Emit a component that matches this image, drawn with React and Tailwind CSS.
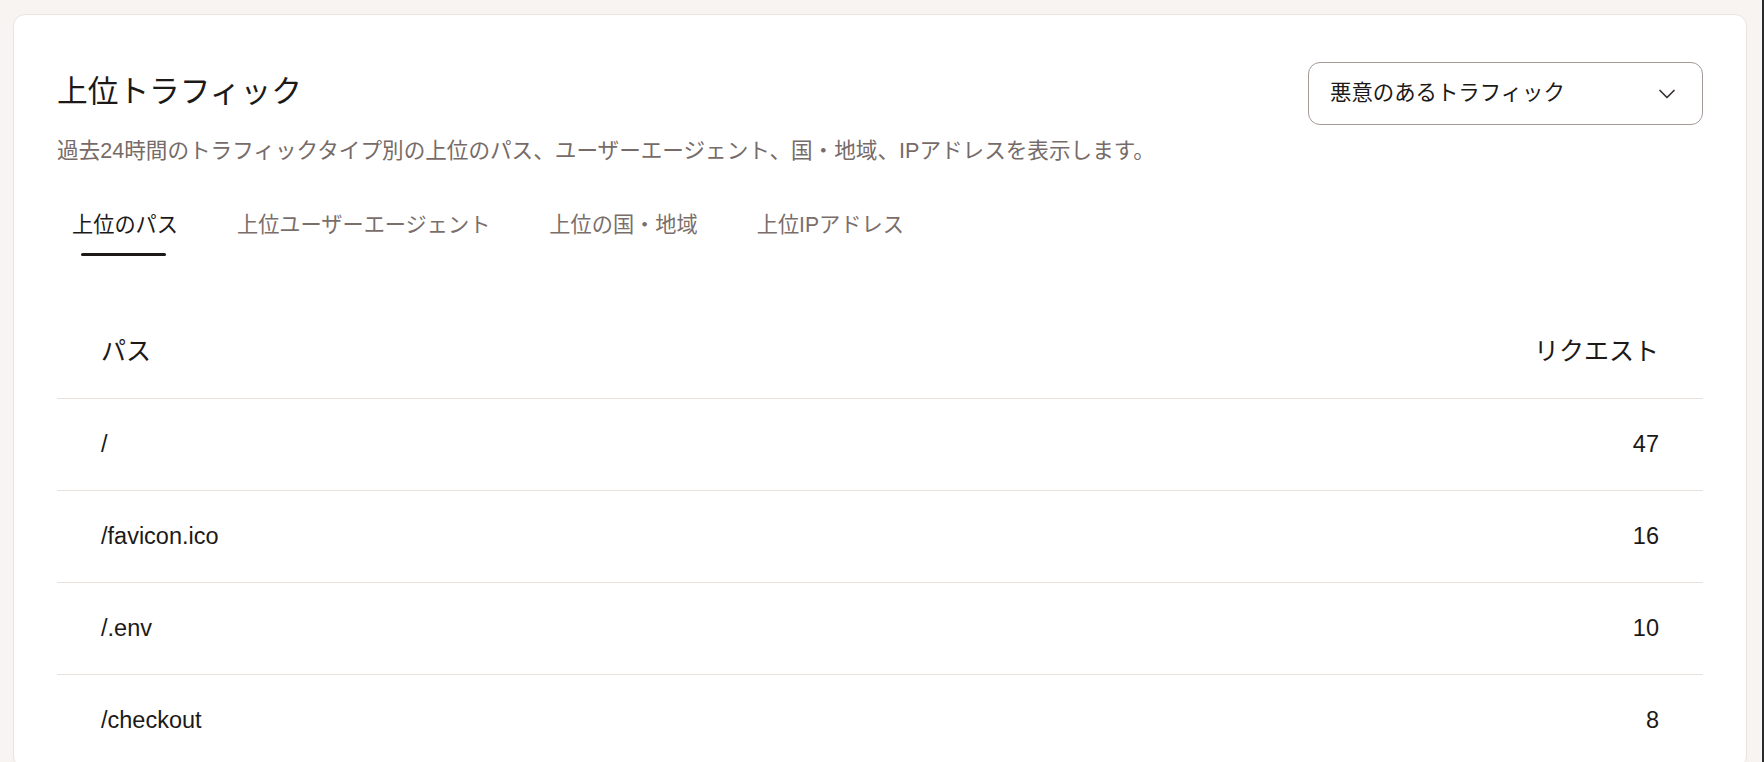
import React from 'react';
import { ChevronDown } from 'lucide-react';

const tabs = ['上位のパス', '上位ユーザーエージェント', '上位の国・地域', '上位IPアドレス'];

const rows = [
  { path: '/', count: 47 },
  { path: '/favicon.ico', count: 16 },
  { path: '/.env', count: 10 },
  { path: '/checkout', count: 8 },
];

export default function App() {
  return (
    <div className="flex h-[762px] overflow-hidden bg-[#f8f4f1] font-['Liberation_Sans','Noto_Sans_CJK_JP',sans-serif] text-[#1c1917]">
      <div className="flex-1 pl-[13px] pr-[15px] pt-[14px]">
        <div className="rounded-[12px] border border-[#ebe3de] bg-white px-[43px] pt-[47px]">
          {/* header */}
          <div className="flex items-start justify-between">
            <div>
              <h2 className="mt-[12px] text-[30.7px] font-normal leading-[36px]">上位トラフィック</h2>
              <p className="mt-[26px] text-[21.6px] leading-[30px] text-[#766b68]">
                過去24時間のトラフィックタイプ別の上位のパス、ユーザーエージェント、国・地域、IPアドレスを表示します。
              </p>
            </div>
            <button className="flex h-[63px] w-[395px] items-center justify-between rounded-[12px] border border-[#a39a97] pl-[21px] pr-[21px] text-[21.4px]">
              <span>悪意のあるトラフィック</span>
              <ChevronDown size={28} strokeWidth={1.5} className="text-[#3a3330]" />
            </button>
          </div>

          {/* tabs */}
          <div className="mt-[44px] flex gap-[29px]">
            {tabs.map((t, i) => (
              <div
                key={t}
                className={`relative px-[15px] pb-[16px] text-[21.2px] leading-[30px] ${
                  i === 0 ? 'text-[#1c1917]' : 'text-[#7a6e6b]'
                }`}
              >
                {t}
                {i === 0 && (
                  <span className="absolute bottom-0 left-[24px] right-[27px] h-[3px] rounded-full bg-[#1c1917]" />
                )}
              </div>
            ))}
          </div>

          {/* table */}
          <table className="mt-[50px] w-full border-collapse">
            <thead>
              <tr className="h-[92px] border-b border-[#e9e2dd]">
                <th className="px-[44px] text-left text-[25px] font-normal">パス</th>
                <th className="px-[44px] text-right text-[25px] font-normal">リクエスト</th>
              </tr>
            </thead>
            <tbody>
              {rows.map((r) => (
                <tr key={r.path} className="h-[92px] border-b border-[#e9e2dd]">
                  <td className="px-[44px] pt-[2px] text-left text-[23.5px]">{r.path}</td>
                  <td className="px-[44px] pt-[2px] text-right text-[23.5px]">{r.count}</td>
                </tr>
              ))}
            </tbody>
          </table>
        </div>
      </div>
      <div className="w-[2px] bg-[#2a2a2a]" />
    </div>
  );
}
